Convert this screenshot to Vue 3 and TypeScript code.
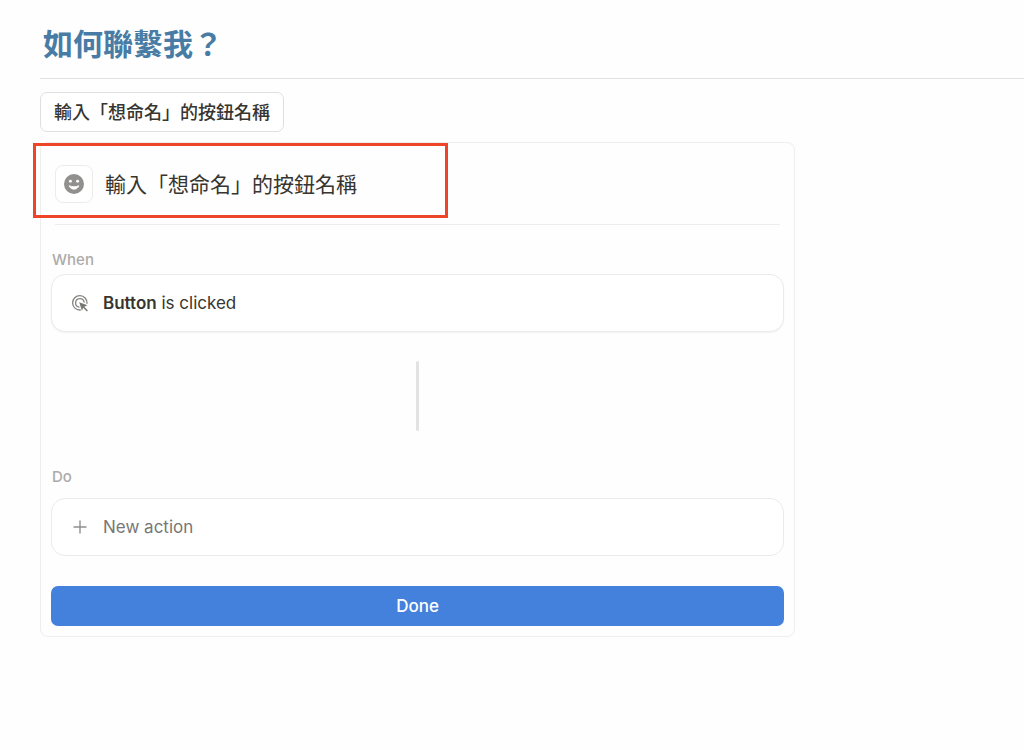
<script setup lang="ts">
import { ref } from 'vue'

const buttonName = ref<string>('輸入「想命名」的按鈕名稱')
</script>

<template>
  <main class="page">
    <h1 class="title">如何聯繫我？</h1>
    <button class="preview" type="button">{{ buttonName }}</button>

    <section class="card" aria-label="Button settings">
      <div class="highlight" aria-hidden="true"></div>
      <header class="name-row">
        <button class="emoji" type="button" aria-label="Choose icon">
          <svg width="20" height="20" viewBox="0 0 20 20" aria-hidden="true">
            <circle cx="10" cy="10" r="10" fill="#91908e" />
            <circle cx="6.400" cy="7.300" r="1.450" fill="#fff" />
            <circle cx="13.600" cy="7.300" r="1.450" fill="#fff" />
            <path d="M5.200 11.700c2.900 1.300 6.700 1.300 9.600 0-.7 2.200-2.500 3.500-4.800 3.500s-4.100-1.300-4.800-3.500z" fill="#fff" stroke="#fff" stroke-width=".8" stroke-linejoin="round" />
          </svg>
        </button>
        <input v-model="buttonName" class="name" type="text" aria-label="Button name" />
      </header>

      <h2 class="label">When</h2>
      <button class="step trigger" type="button">
        <svg class="icon" width="18" height="18" viewBox="0 0 18 18" fill="none" stroke="#858481" stroke-width="1.3" stroke-linecap="round" aria-hidden="true">
          <path d="M9.300 16A7.200 7.200 0 1 1 16 9.300" />
          <path d="M8 13.100A4.300 4.300 0 1 1 13.100 8" />
          <path d="M8.200 8.200l8.200 3-3.100 1.500 3.600 3.700-1 1-3.700-3.600-1.300 3z" fill="#787774" stroke="none" />
        </svg>
        <span><b>Button</b> is clicked</span>
      </button>

      <div class="connector"></div>

      <h2 class="label">Do</h2>
      <button class="step action" type="button">
        <svg class="icon" width="18" height="18" viewBox="0 0 18 18" fill="none" stroke="#91908e" stroke-width="1.4" stroke-linecap="round" aria-hidden="true">
          <path d="M9 3v12M3 9h12" />
        </svg>
        <span>New action</span>
      </button>

      <button class="done" type="button">Done</button>
    </section>
  </main>
</template>

<style>
body {
  margin: 0;
  background: #fefefe;
}
</style>

<style scoped>
.page {
  padding: 12px 0 40px 40px;
  color: #37352f;
  font-family: Inter, "Noto Sans CJK TC", sans-serif;
}

button,
input {
  box-sizing: border-box;
  margin: 0;
  font-family: inherit;
  color: inherit;
}

button {
  cursor: pointer;
}

.title {
  margin: 0;
  padding: 8px 3px 14px;
  border-bottom: 1px solid #e3e3e2;
  color: #487ca5;
  font-family: "Noto Sans CJK TC", sans-serif;
  font-size: 30px;
  font-weight: 700;
  line-height: 44px;
}

.preview {
  display: block;
  height: 40px;
  margin: 13px 0 10px;
  padding: 0 13px 2px;
  border: 1px solid #dfdfde;
  border-radius: 7px;
  background: #fff;
  font-family: "Noto Sans CJK TC", sans-serif;
  font-size: 18px;
  font-weight: 500;
  line-height: 36px;
}

.card {
  position: relative;
  box-sizing: border-box;
  width: 100%;
  max-width: 755px;
  padding: 0 10px 10px;
  border: 1px solid #eeeeed;
  border-radius: 8px;
}

.highlight {
  position: absolute;
  top: 0;
  left: -8px;
  box-sizing: border-box;
  width: 415px;
  height: 75px;
  border: 3px solid #ee4428;
  pointer-events: none;
}

.name-row {
  display: flex;
  align-items: center;
  gap: 12px;
  margin: 0 4px;
  padding: 22px 0 21px;
  border-bottom: 1px solid #eeeeed;
}

.emoji {
  display: flex;
  align-items: center;
  justify-content: center;
  flex: none;
  width: 38px;
  height: 38px;
  padding: 0;
  border: 1px solid #ebebea;
  border-radius: 8px;
  background: #fff;
}

.name {
  flex: 1;
  min-width: 0;
  height: 38px;
  padding: 0 0 2px;
  border: 0;
  outline: 0;
  background: transparent;
  font-family: "Noto Sans CJK TC", sans-serif;
  font-size: 21px;
}

.label {
  margin: 0;
  padding-left: 1px;
  color: #acaba9;
  font-size: 15px;
  font-weight: 500;
  line-height: 20px;
}

.name-row + .label {
  margin-top: 25px;
}

.step {
  display: flex;
  align-items: center;
  gap: 14px;
  width: 100%;
  height: 58px;
  padding: 0 19px;
  border: 1px solid #ebebea;
  border-radius: 14px;
  background: #fff;
  font-size: 17px;
  text-align: left;
}

.trigger {
  margin-top: 4px;
  box-shadow: 0 1px 2px #0000000d;
}

.trigger b {
  font-weight: 600;
}

.action {
  margin-top: 11px;
  color: #787774;
}

.icon {
  flex: none;
}

.connector {
  width: 3px;
  height: 70px;
  margin: 29px auto 36px;
  border-radius: 2px;
  background: #e3e3e2;
}

.done {
  width: 100%;
  height: 40px;
  margin-top: 30px;
  padding: 0;
  border: 0;
  border-radius: 7px;
  background: #4381dc;
  color: #fff;
  font-size: 17px;
  font-weight: 500;
}
</style>
